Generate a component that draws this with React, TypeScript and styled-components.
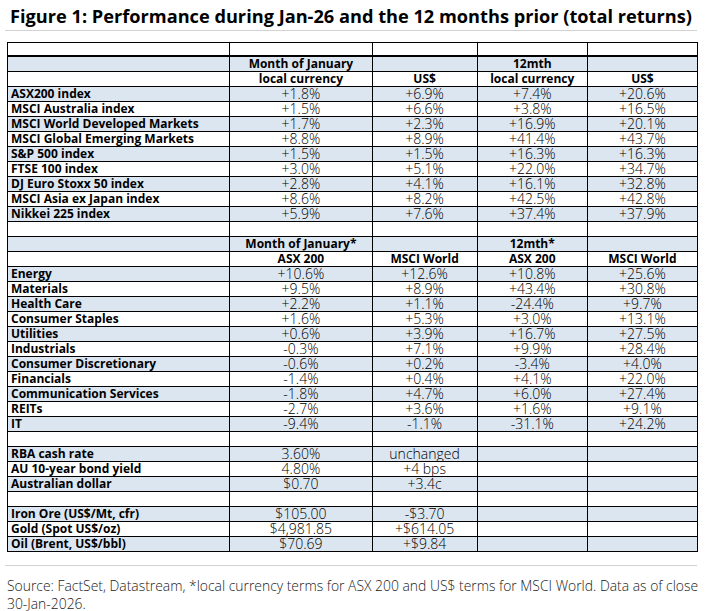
import React from "react";
import styled, { createGlobalStyle } from "styled-components";

const GlobalStyle = createGlobalStyle`
  html, body { margin: 0; padding: 0; background: #ffffff; }
  body { font-family: "Open Sans", "Noto Sans", "Liberation Sans", sans-serif; color: #000; }
`;

const Page = styled.div`
  width: 706px;
  box-sizing: border-box;
  padding: 5px 0 0 7px;
`;

const Title = styled.h1`
  margin: 0 0 0 3px;
  font-size: 18.2px;
  font-weight: 700;
  line-height: 22px;
  color: #000;
  white-space: nowrap;
`;

const Rule = styled.div<{ $top: number }>`
  height: 1px;
  width: 692px;
  margin: ${(p) => p.$top}px 0 0 -2px;
  background: #d2d2d2;
`;

const Table = styled.table`
  margin-top: 11px;
  border-collapse: separate;
  border-spacing: 0;
  table-layout: fixed;
  width: 691px;
  border-top: 1px solid #000;
  border-left: 1px solid #000;
`;

const Row = styled.tr<{ $shade: boolean }>`
  background: ${(p) => (p.$shade ? "#dce6f1" : "#ffffff")};
`;

const Cell = styled.td<{ $label?: boolean; $bold?: boolean; $first?: boolean }>`
  padding: ${(p) => (p.$label ? "0 0 0 3px" : "0")};
  border-right: 1px solid #000;
  border-bottom: ${(p) => (p.$first ? "2px" : "1px")} solid #000;
  height: ${(p) => (p.$first ? "12px" : "14px")};
  line-height: 14px;
  font-size: ${(p) => (p.$bold ? "12px" : "14px")};
  font-weight: ${(p) => (p.$bold ? 700 : 300)};
  text-align: ${(p) => (p.$label ? "left" : "center")};
  white-space: nowrap;
  vertical-align: bottom;
  color: #000;
`;

const Source = styled.p`
  margin: 11px 0 0 0;
  width: 699px;
  font-size: 13.9px;
  font-weight: 300;
  line-height: 18px;
  color: #1a1a1a;
`;

type RowData = {
  kind: "empty" | "first" | "head" | "data";
  cells: string[];
};

const r = (kind: RowData["kind"], cells: string[] = ["", "", "", "", ""]): RowData => ({ kind, cells });

const rows: RowData[] = [
  r("first"),
  r("head", ["", "Month of January", "", "12mth", ""]),
  r("head", ["", "local currency", "US$", "local currency", "US$"]),
  r("data", ["ASX200 index", "+1.8%", "+6.9%", "+7.4%", "+20.6%"]),
  r("data", ["MSCI Australia index", "+1.5%", "+6.6%", "+3.8%", "+16.5%"]),
  r("data", ["MSCI World Developed Markets", "+1.7%", "+2.3%", "+16.9%", "+20.1%"]),
  r("data", ["MSCI Global Emerging Markets", "+8.8%", "+8.9%", "+41.4%", "+43.7%"]),
  r("data", ["S&P 500 index", "+1.5%", "+1.5%", "+16.3%", "+16.3%"]),
  r("data", ["FTSE 100 index", "+3.0%", "+5.1%", "+22.0%", "+34.7%"]),
  r("data", ["DJ Euro Stoxx 50 index", "+2.8%", "+4.1%", "+16.1%", "+32.8%"]),
  r("data", ["MSCI Asia ex Japan index", "+8.6%", "+8.2%", "+42.5%", "+42.8%"]),
  r("data", ["Nikkei 225 index", "+5.9%", "+7.6%", "+37.4%", "+37.9%"]),
  r("empty"),
  r("head", ["", "Month of January*", "", "12mth*", ""]),
  r("head", ["", "ASX 200", "MSCI World", "ASX 200", "MSCI World"]),
  r("data", ["Energy", "+10.6%", "+12.6%", "+10.8%", "+25.6%"]),
  r("data", ["Materials", "+9.5%", "+8.9%", "+43.4%", "+30.8%"]),
  r("data", ["Health Care", "+2.2%", "+1.1%", "-24.4%", "+9.7%"]),
  r("data", ["Consumer Staples", "+1.6%", "+5.3%", "+3.0%", "+13.1%"]),
  r("data", ["Utilities", "+0.6%", "+3.9%", "+16.7%", "+27.5%"]),
  r("data", ["Industrials", "-0.3%", "+7.1%", "+9.9%", "+28.4%"]),
  r("data", ["Consumer Discretionary", "-0.6%", "+0.2%", "-3.4%", "+4.0%"]),
  r("data", ["Financials", "-1.4%", "+0.4%", "+4.1%", "+22.0%"]),
  r("data", ["Communication Services", "-1.8%", "+4.7%", "+6.0%", "+27.4%"]),
  r("data", ["REITs", "-2.7%", "+3.6%", "+1.6%", "+9.1%"]),
  r("data", ["IT", "-9.4%", "-1.1%", "-31.1%", "+24.2%"]),
  r("empty"),
  r("data", ["RBA cash rate", "3.60%", "unchanged", "", ""]),
  r("data", ["AU 10-year bond yield", "4.80%", "+4 bps", "", ""]),
  r("data", ["Australian dollar", "$0.70", "+3.4c", "", ""]),
  r("empty"),
  r("data", ["Iron Ore (US$/Mt, cfr)", "$105.00", "-$3.70", "", ""]),
  r("data", ["Gold (Spot US$/oz)", "$4,981.85", "+$614.05", "", ""]),
  r("data", ["Oil (Brent, US$/bbl)", "$70.69", "+$9.84", "", ""]),
];

const colWidths = [222, 142, 105, 110, 110];

export default function App() {
  let shade = false;
  return (
    <>
      <GlobalStyle />
      <Page>
        <Title>Figure 1: Performance during Jan-26 and the 12 months prior (total returns)</Title>
        <Rule $top={3} />
        <Table>
          <colgroup>
            {colWidths.map((w, i) => (
              <col key={i} style={{ width: w }} />
            ))}
          </colgroup>
          <tbody>
            {rows.map((row, ri) => {
              if (row.kind === "first" || row.kind === "empty") shade = false;
              else shade = ri === 1 || ri === 13 ? true : !shade;
              const isShade = shade;
              return (
                <Row key={ri} $shade={isShade}>
                  {row.cells.map((c, ci) => (
                    <Cell
                      key={ci}
                      $label={ci === 0}
                      $bold={ci === 0 || row.kind === "head"}
                      $first={row.kind === "first"}
                    >
                      {c}
                    </Cell>
                  ))}
                </Row>
              );
            })}
          </tbody>
        </Table>
        <Rule $top={13} />
        <Source>
          Source: FactSet, Datastream, *local currency terms for ASX 200 and US$ terms for MSCI World. Data as of close
          30-Jan-2026.
        </Source>
      </Page>
    </>
  );
}
